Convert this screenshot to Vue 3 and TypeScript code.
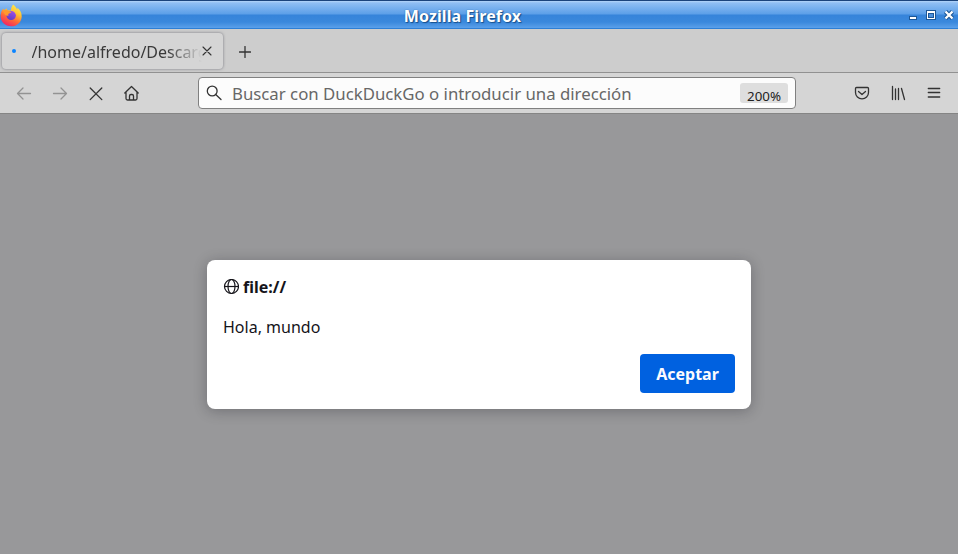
<script setup lang="ts">
const tabTitle: string = '/home/alfredo/Descarg'
const placeholder: string = 'Buscar con DuckDuckGo o introducir una dirección'
const zoomLevel: string = '200%'
</script>

<template>
  <div class="window">
    <header class="titlebar">
      <svg class="logo" viewBox="0 0 24 24">
        <defs>
          <linearGradient id="flame" x1="0.8" y1="0" x2="0.3" y2="1">
            <stop offset="0" stop-color="#fff44f" />
            <stop offset="0.35" stop-color="#ffc035" />
            <stop offset="0.65" stop-color="#ff6a36" />
            <stop offset="1" stop-color="#f0206a" />
          </linearGradient>
          <linearGradient id="core" x1="0.7" y1="0" x2="0.3" y2="1">
            <stop offset="0" stop-color="#a04fe8" />
            <stop offset="1" stop-color="#5a3bc4" />
          </linearGradient>
        </defs>
        <path fill="url(#flame)" d="M13.2 0.5c2 1.6 3.2 3.3 3.9 5 .3-.6.4-1.100.3-1.700C20 5.900 21.800 8.800 21.700 12.400 21.500 18.200 17 22.300 11.200 22.300 5.100 22.300.6 17.900.6 12c0-3 1-5.800 2.700-7.600.2.900.5 1.400.9 1.800C5 5.300 6.100 4.700 7.200 4.600c-.2.700-.2 1.300 0 1.800 1.400-.1 2.800 0 3.700.5.100-2.600.8-4.800 2.300-6.400z" />
        <ellipse cx="11.200" cy="11.600" rx="4.700" ry="4.500" fill="url(#core)" />
        <path fill="#ff9a2c" d="M3.200 6.800c1.800-1 4-.9 5.600.3l2.500.8c-.5 1.200-2.300 1.200-3 2 0 .8.100 1.200.5 1.700-2.500.4-4.300-.9-4.700-2.700z" />
      </svg>
      <span class="title">Mozilla Firefox</span>
      <svg class="controls" viewBox="0 0 52 18">
        <g class="control-edge">
          <rect x="3" y="10" width="8" height="4" />
          <path d="M20 4h10v10H20z" />
          <path d="M39.500 5.500l7 7m0-7l-7 7" fill="none" stroke="#1d5796" stroke-width="4.500" />
        </g>
        <rect x="4" y="11" width="6" height="2" fill="#fff" />
        <rect x="21" y="5" width="8" height="8" fill="#fff" />
        <rect x="22" y="7" width="6" height="5" fill="#1d5796" />
        <rect x="23" y="8" width="4" height="3" fill="#4c90dc" />
        <path d="M39.500 5.500l7 7m0-7l-7 7" fill="none" stroke="#fff" stroke-width="2.300" />
      </svg>
    </header>

    <nav class="tabs">
      <div class="tab">
        <span class="spinner"></span>
        <span class="tab-title">{{ tabTitle }}</span>
        <svg class="tab-close" viewBox="0 0 10 10"><path d="M1 1l8 8M9 1L1 9" /></svg>
      </div>
      <svg class="new-tab" viewBox="0 0 12 12"><path d="M6 .5v11M.5 6h11" /></svg>
    </nav>

    <div class="toolbar">
      <div class="nav-buttons">
        <svg class="icon disabled" viewBox="0 0 16 16"><path d="M14.500 8.500H1.500M7 3L1.500 8.500l5.500 5.500" /></svg>
        <svg class="icon disabled" viewBox="0 0 16 16"><path d="M1.500 8.500h13M9 3l5.500 5.500L9 14" /></svg>
        <svg class="icon" viewBox="0 0 16 16"><path d="M2.200 3l11.600 11.600M13.800 3L2.200 14.600" /></svg>
        <svg class="icon" viewBox="0 0 16 16"><path d="M.8 8L7.500 1.500l6.700 6.500M2 7.200v6.300q0 1.500 1.500 1.500h8q1.500 0 1.500-1.500V7.200M5.500 15v-4q0-1.500 1.500-1.500h1Q9.500 9.500 9.500 11v4" /></svg>
      </div>
      <div class="urlbar">
        <svg class="search" viewBox="0 0 16 16"><circle cx="6.200" cy="6" r="4.900" /><path d="M9.700 9.500L15 14.500" /></svg>
        <span class="placeholder">{{ placeholder }}</span>
        <span class="zoom">{{ zoomLevel }}</span>
      </div>
      <div class="actions">
        <svg class="icon" viewBox="0 0 16 16"><path d="M2.500 2.500h11q1 0 1 1v4a6.500 6.300 0 0 1-13 0v-4q0-1 1-1zM4.500 6.500L8 9.500l3.500-3" /></svg>
        <svg class="icon" viewBox="0 0 16 16"><path d="M2.500 1.500v13M5.500 4v10.500M8.500 3.500v11M11.500 3.500l3 11" /></svg>
        <svg class="icon" viewBox="0 0 16 16"><path d="M2.300 3.500h11.400M2.300 7.500h11.400M2.300 12h11.400" /></svg>
      </div>
    </div>

    <main class="page">
      <section class="dialog">
        <div class="origin">
          <svg class="globe" viewBox="0 0 16 16"><circle cx="8.500" cy="7.500" r="7" /><ellipse cx="8.500" cy="7.500" rx="3.500" ry="7" /><path d="M1.500 7.500h14" /></svg>
          <strong>file://</strong>
        </div>
        <p class="message">Hola, mundo</p>
        <button class="accept" type="button">Aceptar</button>
      </section>
    </main>
  </div>
</template>

<style>
body {
  margin: 0;
  overflow: hidden;
}
</style>

<style scoped>
.window {
  width: 958px;
  height: 554px;
  display: flex;
  flex-direction: column;
  font-family: "Noto Sans", sans-serif;
  font-size: 16px;
  color: #15141a;
}
.window svg {
  display: block;
  flex: none;
}
.titlebar {
  box-sizing: border-box;
  height: 29px;
  flex: none;
  display: grid;
  grid-template-columns: 52px 1fr 52px;
  align-items: center;
  border-top: 1px solid #1b437b;
  border-bottom: 1px solid #2d7fd6;
  background: linear-gradient(#b4d5f8 0, #8fbef3 2px, #5c9fe8 13px, #3684da 14px, #3a88dc 21px, #5ba0ea 27px);
}
.logo {
  width: 24px;
  height: 24px;
  margin-top: 2px;
}
.title {
  text-align: center;
  color: #fff;
  font-weight: 700;
  letter-spacing: 0.100px;
  line-height: 22px;
  padding: 3px 33px 0 0;
  text-shadow: 1px 1px 1px #174f8b, 0 0 1px #174f8b;
}
.controls {
  width: 52px;
  height: 18px;
}
.control-edge {
  fill: #1d5796;
}
.tabs {
  box-sizing: border-box;
  height: 44px;
  flex: none;
  display: flex;
  padding: 4px 0 0 2px;
  background: #cdcdcd;
  border-bottom: 1px solid #919191;
}
.tab {
  box-sizing: border-box;
  width: 221px;
  height: 36px;
  display: flex;
  align-items: center;
  padding-left: 9.500px;
  border-radius: 4px;
  background: #d5d5d5;
  box-shadow: 0 0 3px #77777f;
}
.spinner {
  width: 4px;
  height: 4px;
  border-radius: 50%;
  background: #0a84ff;
}
.tab-title {
  width: 170px;
  margin-left: 16px;
  white-space: nowrap;
  line-height: 24px;
  padding-top: 2px;
  color: #3a3a3a;
  mask-image: linear-gradient(to right, #000 135px, transparent 170px);
}
.tab-close {
  width: 10px;
  height: 10px;
  margin-left: 0.500px;
}
.new-tab {
  width: 12px;
  height: 12px;
  margin: 12.500px 0 0 15.500px;
}
.tab-close path,
.new-tab path,
.icon path,
.search {
  fill: none;
  stroke: #333;
  stroke-width: 1.300;
  stroke-linecap: round;
  stroke-linejoin: round;
}
.tab-close path {
  stroke-width: 1.100;
}
.toolbar {
  box-sizing: border-box;
  height: 41px;
  flex: none;
  display: flex;
  align-items: center;
  padding: 0 16px;
  background: #d5d5d5;
  border-bottom: 1px solid #858585;
}
.nav-buttons,
.actions {
  display: flex;
  gap: 20px;
}
.icon {
  width: 16px;
  height: 16px;
}
.disabled {
  opacity: 0.4;
}
.urlbar {
  box-sizing: border-box;
  width: 598px;
  height: 32px;
  margin: 0 58px;
  display: flex;
  align-items: center;
  padding: 0 7px;
  border: 1px solid #808080;
  border-radius: 4px;
  background: #fcfcfc;
}
.search {
  width: 16px;
  height: 16px;
}
.placeholder {
  margin-left: 10px;
  padding-top: 2px;
  font-size: 16.800px;
  line-height: 24px;
  white-space: nowrap;
  color: #676767;
}
.zoom {
  width: 48px;
  height: 20px;
  margin-left: auto;
  border-radius: 3px;
  background: #dedede;
  font-size: 13.330px;
  line-height: 26px;
  text-align: center;
  color: #222;
}
.page {
  flex: 1;
  display: flex;
  justify-content: center;
  align-items: flex-start;
  background: #98989a;
}
.dialog {
  box-sizing: border-box;
  width: 544px;
  height: 149px;
  margin-top: 146px;
  padding: 16px;
  display: flex;
  flex-direction: column;
  border-radius: 8px;
  background: #fff;
  box-shadow: 0 2px 14px rgba(20, 20, 30, 0.3);
}
.origin {
  display: flex;
  align-items: center;
  gap: 4px;
  line-height: 22px;
}
.globe {
  width: 16px;
  height: 16px;
  fill: none;
  stroke: #15141a;
  stroke-width: 1.200;
}
.message {
  margin: 18px 0 0;
  line-height: 22px;
}
.accept {
  width: 95px;
  height: 39px;
  margin: auto 0 0 auto;
  padding: 0;
  border: 0;
  border-radius: 4px;
  background: #0061e0;
  color: #fbfbfe;
  font: 700 16px/22px "Noto Sans", sans-serif;
}
</style>
